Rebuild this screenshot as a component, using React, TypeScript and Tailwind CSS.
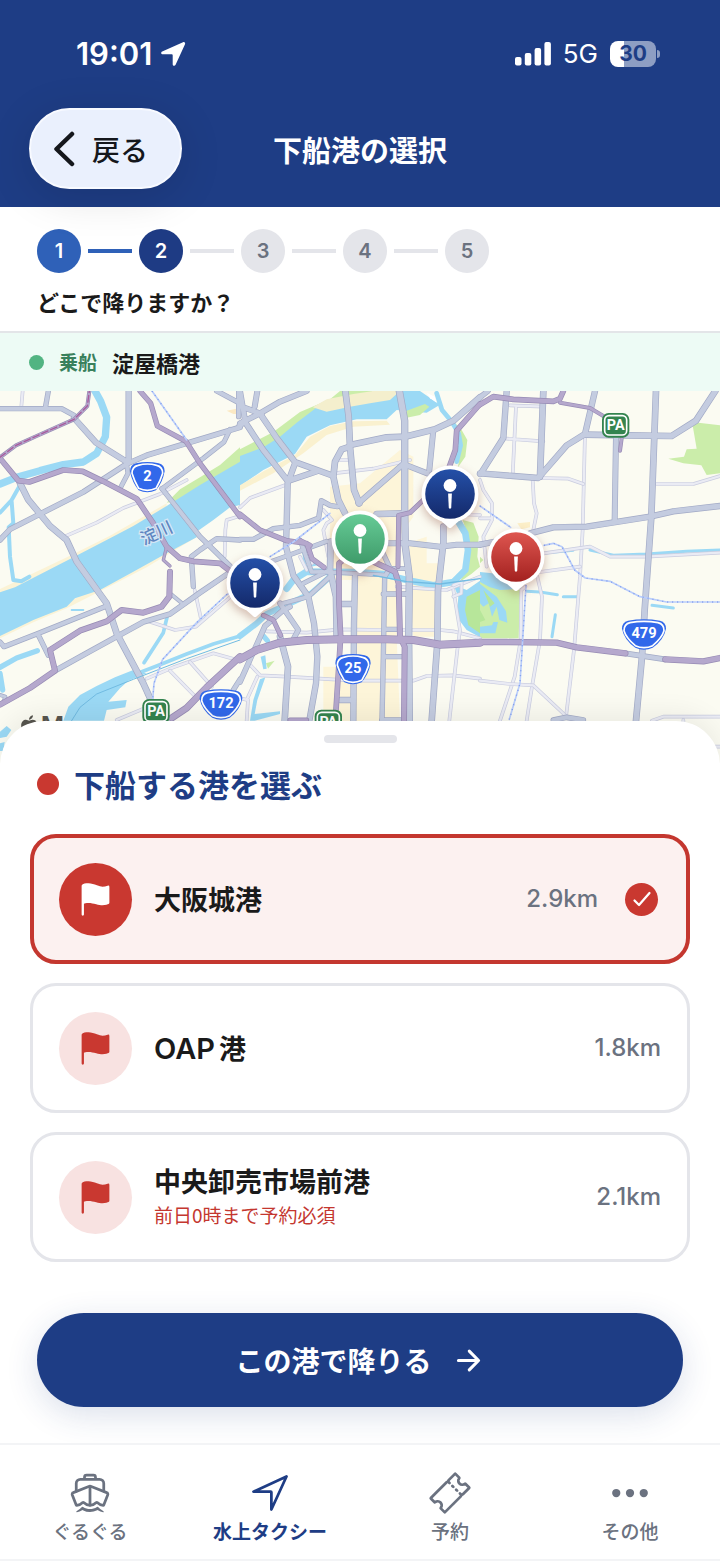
import { useState } from "react";
import type { ReactNode } from "react";
import {
  IoArrowForward,
  IoBoatOutline,
  IoCheckmark,
  IoEllipsisHorizontal,
  IoFlag,
  IoNavigateOutline,
  IoTicketOutline,
} from "react-icons/io5";
import { FaApple } from "react-icons/fa";

const FONT = "font-['Inter','Noto_Sans_CJK_JP',sans-serif]";
const JP = "font-['Noto_Sans_CJK_JP','Inter',sans-serif]";

/* ---------- Map data: three tiles, each 720 units wide ---------- */

type Road = [d: string, width: number];
type Tile = {
  x: number;
  areas: [d: string, fill: string][];
  streams: Road[];
  minor: string[];
  roads: Road[];
  highways: Road[];
  rails: string[];
};

const WATER = "#9bd9f5";
const GREEN = "#cbedaa";
const SAND = "#fbf3d6";

const tiles: Tile[] = [
  {
    x: 0,
    areas: [
      ["M500 338L540 298L600 262L660 225L720 172V225L620 280L540 330Z", GREEN],
      ["M0 597L210 497L330 437L500 340V360L210 520L0 615Z", SAND],
      ["M0 745L100 697L200 655L300 604L440 532L600 435L580 430L400 530L200 640L0 728Z", SAND],
      ["M0 607L45 592L210 507L330 445L400 408L500 348L600 285L720 215V345L690 352L640 390L590 425V442L500 490L400 545L300 600L225 625L200 650L100 690L0 738Z", WATER],
      ["M190 992L205 950L240 915L290 888L345 862L400 840L440 850L385 872L360 895L325 935L380 930L376 952L320 960L312 992Z", WATER],
      ["M680 62L720 54V72L700 72Z", "#fbe9c4"],
      ["M0 1025L20 1008L34 1020L20 1040L0 1044ZM0 1060L14 1056L10 1083H0Z", WATER],
    ],
    streams: [
      ["M285 3L302 34L320 82L316 140L290 190L250 216L190 224L120 242L50 262L0 282", 22],
      ["M62 282L35 330L0 368M35 335L40 400L26 412L30 500L40 570L64 574L88 560", 12],
      ["M0 832L50 804L112 782M0 850L8 900", 16],
      ["M502 678L490 728L462 772L432 818", 11],
      ["M400 855L470 828L560 792L640 762L720 738", 11],
      ["M215 660H250", 6],
    ],
    minor: [
      "M68 3L64 50",
      "M200 437L290 398L370 354L480 312L560 270",
      "M720 378L680 390L676 420L674 500",
      "M584 600L602 682",
      "M440 692L525 720L588 710L720 596",
      "M440 866L520 832L640 790L720 812",
      "M510 842L588 922M570 816L636 890",
      "M350 990L440 952",
    ],
    roads: [
      ["M0 56H185L222 76M145 3L136 54", 14],
      ["M222 84L288 158L378 214M386 3V214", 17],
      ["M0 450L30 418L120 372L250 306L380 222L440 196L560 160L720 112", 15],
      ["M380 225L384 250L360 296M690 118L672 156L610 205L486 296", 13],
      ["M60 280L84 328L150 408L200 450L230 515L320 640L350 730L430 880L450 924", 18],
      ["M486 296L600 440L690 528", 14],
      ["M720 450L650 446L600 480L574 500L580 590", 14],
      ["M0 756L12 770L110 732L320 648M115 735L145 796", 14],
      ["M165 842L270 784L430 696L510 672L600 608L700 540", 15],
      ["M510 610L544 638M0 915L16 920L10 936", 10],
      ["M650 3L720 40M716 3V80", 14],
      ["M720 868L700 900", 14],
    ],
    highways: [
      ["M0 205L55 272L88 276L190 240L248 244L310 274L410 326L460 400L500 470L540 505L580 514L660 520L686 540", 15],
      ["M500 470L490 510L510 528", 8],
      ["M510 545L508 620L485 650L430 668L365 660L320 694L240 722L150 780L165 842L90 894L0 944", 16],
      ["M420 3L452 40L472 108L558 154L600 220L720 380", 14],
      ["M720 800L620 892L560 954L515 984", 19],
      ["M0 202L48 166L110 138L222 88L262 48L268 3", 10],
    ],
    rails: ["M456 3L560 150M720 590L680 614L590 698L488 808L462 880L458 930"],
  },
  {
    x: 720,
    areas: [
      ["M270 290L360 280L480 180L520 200V380L470 450V740L480 992H380L250 1000V830H340V570H270V420Z", "#fdf5d9"],
      ["M500 460L560 440V520H600V740H520Z", "#fdf5d9"],
      ["M0 178L100 126L180 66L270 28L300 3H400L330 45L250 58L180 98L100 165L0 214Z", GREEN],
      ["M0 198L70 172L120 140L170 98L220 60L250 35L290 40L360 24L390 36L430 3H540L600 44L560 68L470 60L440 88H350L270 106L200 140L165 192L70 240L0 288Z", WATER],
      ["M218 52L260 28L340 12L400 3H480L450 30L390 40L330 50L260 65Z", "#f4efcd"],
      ["M165 195L210 140L270 108L340 94L440 92L450 104L340 110L260 135L190 190L100 250L0 302V286L70 244Z", "#faf1cf"],
      ["M500 62L555 42L568 50L540 75L496 84Z", GREEN],
      ["M640 95L662 115L682 150L676 200L654 232L662 170L650 125Z", GREEN],
      ["M668 390L700 398L716 440L712 500L720 530L694 552L660 575L684 520L694 470Z", GREEN],
      ["M640 584L680 600L720 572V742L680 720L650 680L655 620Z", WATER],
      ["M680 620L720 600V730L685 706L675 660Z", "#b7e69a"],
      ["M560 8L584 20L590 38L570 25Z", "#ffffff"],
      ["M62 800L76 796L80 836L70 838Z", WATER],
      ["M78 820L104 812L84 836Z", GREEN],
      ["M30 992L40 930L60 868L76 862L52 930L44 972L120 964V972L44 992Z", WATER],
    ],
    streams: [
      ["M590 10L606 60L636 96L656 130L662 166L650 215", 14],
      ["M655 395L676 430L684 480L676 540L640 576L580 586L500 570L430 552L350 546L200 545L160 570L140 596", 20],
      ["M270 560L215 610L150 640L80 672L50 700L0 738", 18],
      ["M72 740L82 752", 16],
      ["M190 476L195 530L240 520", 8],
    ],
    minor: [
      "M0 352L30 324L134 286M280 250L400 236L510 210M290 210H330",
      "M80 724L200 728L300 718L430 720L600 720L640 724L720 745",
      "M30 824L60 856L140 860L340 872H520L560 858L640 856L720 866",
      "M470 590L550 596L620 600L720 560M640 600L660 720L652 780L628 992",
      "M250 360L276 390L260 400L250 420L265 500M590 370L720 375",
      "M20 992L24 930L0 925M52 860L20 930M640 586L665 575L664 610L640 620",
      "M180 500L200 540M210 480L216 520",
    ],
    roads: [
      ["M0 100L60 70L120 35L200 3M0 48L65 72M52 3L44 50M0 3L15 90", 16],
      ["M15 96L70 180L145 275M65 78L110 144L165 216L275 256M165 220L146 272L230 244", 17],
      ["M316 3L326 80L330 170L342 300L358 340M330 170L305 178L285 215L280 260L295 330L315 370", 18],
      ["M0 106L16 90M330 165L440 142L495 140L585 118L640 92L720 22", 18],
      ["M478 3L494 92V350L496 470L508 560L506 740L508 992", 20],
      ["M355 340L490 222L562 250M580 120L568 240", 16],
      ["M143 280L140 400L138 470L160 556L205 620L222 700L232 800L228 880L208 992", 17],
      ["M0 448H40L100 416L180 406L236 384L244 332L270 346L292 350", 14],
      ["M0 548L140 498L260 454M180 450L215 546L270 545M190 580L270 540M130 640L205 620L270 560", 13],
      ["M120 640L175 720L162 744M0 876L75 708L130 660L150 650", 15],
      ["M120 740L144 830L134 992M272 455L270 540L288 620L290 740", 18],
      ["M345 560L342 700L340 992M300 642H340M300 930H340", 17],
      ["M410 372L495 370M610 410V460L594 600L592 760L575 992", 18],
      ["M440 460H510L600 470L650 464H720", 16],
      ["M420 470L450 535L434 560L430 800L426 992M430 612H500M432 718H480M432 800H500M425 990H490", 14],
      ["M262 546L340 550L430 555M450 535L500 536L512 570", 12],
    ],
    highways: [
      ["M0 372L60 420L140 452L200 460L216 506L252 532M180 452L210 466", 14],
      ["M0 808L50 780L120 758L200 750L300 748L440 748L520 750L600 764L720 758", 22],
      ["M310 510L297 520V640L302 740L288 960", 15],
      ["M400 515L465 545L476 580L480 740L494 770L492 992", 16],
      ["M550 330L510 368L476 376L474 530", 13],
      ["M720 42L650 122L646 180L628 230", 15],
      ["M70 676L100 690L122 736M150 990L200 990", 13],
    ],
    rails: ["M90 500L160 456L270 370"],
  },
  {
    x: 1440,
    areas: [
      ["M0 556L60 580L120 600L116 745H0Z", GREEN],
      ["M636 96L720 106V250L680 255L664 226L610 220L565 206L612 200L620 178L650 176L642 130Z", GREEN],
      ["M112 400L150 396V412L124 418Z", "#fcefc8"],
      ["M0 546L60 552L128 596L60 600L30 592L0 576Z", WATER],
      ["M0 582L50 620L78 664L82 698L58 690L50 650L36 680L26 640L10 650L0 640ZM0 710L36 706L40 696H54L46 730H0Z", WATER],
      ["M10 600L44 640L30 650ZM0 660L16 690L0 696Z", "#b7e69a"],
      ["M0 500L10 510L0 520Z", GREEN],
    ],
    streams: [
      ["M140 604L180 606L232 614M250 620H294M516 646L580 654", 9],
      ["M226 674L216 740", 9],
      ["M330 480L400 496L500 492L620 484L720 480", 9],
      ["M200 490L280 482", 6],
    ],
    minor: [
      "M90 46L190 50M108 50L98 255M80 146L190 154M315 130L308 420L300 560L282 780L258 980",
      "M0 270L10 300L36 340V390L10 440L20 530M0 385H34",
      "M158 270L162 340L170 370L160 420M180 264L265 266L310 282",
      "M190 490L330 470L390 500L500 500L720 488M180 546L300 530",
      "M136 590L124 600L122 750L104 860L60 992M172 560L186 620L180 750L156 890L140 992",
      "M0 872L90 882L160 886L258 978M516 992L550 980H720M610 990V1000M700 1070H720",
      "M530 282H640L720 258",
    ],
    roads: [
      ["M80 3L70 144L4 248L0 252M0 250L100 258L175 264L260 166L315 132L345 3", 17],
      ["M190 3L180 260M315 134L440 136L575 138L648 92L706 3", 18],
      ["M528 3L514 380L494 660L486 800L468 992", 18],
      ["M0 464L40 456M150 430L220 412L320 410L510 380L580 364L720 348", 17],
      ["M408 140L404 390", 16],
      ["M0 22L24 3M436 790L556 808M220 990L260 982L310 990", 15],
    ],
    highways: [
      ["M0 44L40 20L100 28L220 34L240 26L250 3", 15],
      ["M240 38L330 54L370 78M425 145L420 182", 10],
      ["M0 756H80L230 758L290 772L436 790M556 808L670 814L720 804", 17],
    ],
    rails: [
      "M0 348L92 412M192 466L220 460L246 470L268 510L284 540L316 564L390 574L480 620L560 636H720",
      "M138 586L120 880L88 988",
    ],
  },
];

function TileLayer({ pick }: { pick: (tile: Tile) => ReactNode }) {
  return (
    <>
      {tiles.map((tile) => (
        <g key={tile.x} transform={`translate(${tile.x} 0)`}>
          {pick(tile)}
        </g>
      ))}
    </>
  );
}

function strokes(list: Road[], color: string, extra: number) {
  return list.map(([d, w]) => <path key={d} d={d} stroke={color} strokeWidth={w + extra} />);
}

function RouteShield({ x, y, w, label }: { x: number; y: number; w: number; label: string }) {
  const h = w / 2;
  const shape = (r: number, t: number, b: number) =>
    `M${-r + 18} ${-t}Q0 ${-t - 8} ${r - 18} ${-t}Q${r} ${-t + 4} ${r} ${-t + 24}Q${r - 6} ${b - 30} 26 ${b - 6}Q0 ${b + 6} -26 ${b - 6}Q${-r + 6} ${b - 30} ${-r} ${-t + 24}Q${-r} ${-t + 4} ${-r + 18} ${-t}Z`;
  return (
    <g transform={`translate(${x} ${y})`}>
      <path d={shape(h, 42, 45)} fill="#3168ea" />
      <path d={shape(h - 6, 36, 39)} fill="#3168ea" stroke="#fff" strokeWidth="5" />
      <text y="10" textAnchor="middle" fill="#fff" fontSize="44" fontWeight="700" fontFamily="Roboto">
        {label}
      </text>
    </g>
  );
}

function ParkingSign({ x, y }: { x: number; y: number }) {
  return (
    <g transform={`translate(${x} ${y})`}>
      <rect x="-41" y="-37" width="82" height="74" rx="20" fill="#34844f" />
      <rect x="-33" y="-29" width="66" height="58" rx="13" fill="#34844f" stroke="#fff" strokeWidth="5" />
      <text
        y="15"
        textAnchor="middle"
        fill="#fff"
        fontSize="43"
        fontWeight="700"
        fontFamily="'Liberation Sans Narrow', Roboto, sans-serif"
      >
        PA
      </text>
    </g>
  );
}

function CityMap() {
  return (
    <svg viewBox="0 3 2160 1125" className="block w-full" role="img" aria-label="大阪の地図">
      <rect y="3" width="2160" height="1125" fill="#fbfbf2" />
      <TileLayer pick={(t) => t.areas.map(([d, fill]) => <path key={d} d={d} fill={fill} />)} />
      <g fill="none" strokeLinejoin="round" strokeLinecap="round">
        <TileLayer pick={(t) => strokes(t.streams, WATER, 0)} />
        <TileLayer
          pick={(t) =>
            t.minor.map((d) => (
              <g key={d}>
                <path d={d} stroke="#c9ccdf" strokeWidth="11" />
                <path d={d} stroke="#eaebf4" strokeWidth="7" />
              </g>
            ))
          }
        />
        <TileLayer pick={(t) => strokes(t.roads, "#a2aac6", 2)} />
        <TileLayer pick={(t) => strokes(t.roads, "#c4cce0", -2)} />
        <TileLayer pick={(t) => strokes(t.highways, "#978bb4", 2)} />
        <TileLayer pick={(t) => strokes(t.highways, "#b5a8cd", -2)} />
        <path d="M0 202L48 166L110 138L222 88L262 48L268 3" stroke="#a85a9c" strokeWidth="4" strokeDasharray="20 9" />
        <path d="M215 992L240 952L290 912L400 868L560 806L720 750" stroke="#71bbe2" strokeWidth="3" />
        <path d="M1120 556L1220 575L1320 582L1440 566" stroke="#71bbe2" strokeWidth="4" />
        <TileLayer
          pick={(t) =>
            t.rails.map((d) => (
              <g key={d}>
                <path d={d} stroke="#b9cdfb" strokeWidth="5" />
                <path d={d} stroke="#7f9bec" strokeWidth="4" strokeDasharray="3 12" strokeLinecap="butt" />
              </g>
            ))
          }
        />
      </g>
      <text
        transform="translate(432 466) rotate(-25)"
        fontSize="50"
        fontWeight="500"
        fill="#5f86c0"
        stroke="#d5e6f5"
        strokeWidth="8"
        paintOrder="stroke"
      >
        淀川
      </text>
      <RouteShield x={442} y={262} w={104} label="2" />
      <RouteShield x={663} y={944} w={128} label="172" />
      <RouteShield x={1059} y={838} w={106} label="25" />
      <RouteShield x={1932} y={734} w={132} label="479" />
      <ParkingSign x={468} y={964} />
      <ParkingSign x={985} y={996} />
      <ParkingSign x={1847} y={106} />
      <g transform="translate(55 972)">
        <FaApple size={64} color="#57554f" />
      </g>
      <text x="122" y="1036" fontSize="76" fontWeight="600" fill="#57554f">
        Maps
      </text>
    </svg>
  );
}

type Pin = { id: string; name: string; place: string; from: string; to: string };

const pins: Pin[] = [
  { id: "market", name: "中央卸売市場前港", place: "left-[35.4%] top-[51.2%]", from: "#2450a8", to: "#14296a" },
  { id: "yodoyabashi", name: "淀屋橋港", place: "left-[50%] top-[39.5%]", from: "#66cb96", to: "#3f9b6a" },
  { id: "oap", name: "OAP港", place: "left-[62.5%] top-[27.5%]", from: "#2450a8", to: "#14296a" },
  { id: "castle", name: "大阪城港", place: "left-[71.6%] top-[44.3%]", from: "#de5650", to: "#a3211f" },
];

function MapPin({ pin }: { pin: Pin }) {
  return (
    <button
      type="button"
      aria-label={pin.name}
      className={`absolute -mt-8 -ml-8 size-16 drop-shadow-[0_4px_5px_rgba(120,40,20,0.3)] ${pin.place}`}
    >
      <svg viewBox="-32 -32 64 64" className="block size-full overflow-visible" aria-hidden="true">
        <defs>
          <linearGradient id={`fill-${pin.id}`} x1="0" y1="0" x2="0" y2="1">
            <stop offset="0" stopColor={pin.from} />
            <stop offset="1" stopColor={pin.to} />
          </linearGradient>
        </defs>
        <path d="M-10 26L-1.500 33.500Q0 34.500 1.500 33.500L10 26Z" fill="#fff" />
        <circle r="28.500" fill="#fff" />
        <circle r="24.800" fill={`url(#fill-${pin.id})`} />
        <circle cy="-8.500" r="6.400" fill="#fff" />
        <path d="M-1.900 -.5H1.900L1.200 14Q0 15.500 -1.200 14Z" fill="#fff" />
      </svg>
    </button>
  );
}

/* ---------- Header ---------- */

function StatusBar() {
  return (
    <div className="flex h-[108px] items-center justify-between pr-[60px] pl-[76px] text-white">
      <div className="flex items-center gap-2">
        <span className="text-[31px] leading-8 font-semibold">19:01</span>
        <svg viewBox="0 0 26 26" className="size-[26px]" aria-hidden="true">
          <path
            d="M23 1.200C24.500 .6 25.600 1.700 25 3.200L15.600 23.800C14.900 25.400 12.700 25 12.700 23.200V14.200C12.700 13.600 12.400 13.300 11.800 13.300H2.800C1 13.300 .6 11.100 2.200 10.400Z"
            fill="currentColor"
          />
        </svg>
      </div>
      <div className="flex items-center gap-3">
        <svg viewBox="0 0 36 24" className="h-6 w-9" aria-hidden="true" fill="currentColor">
          <rect x="0" y="15" width="6.500" height="8.500" rx="2" />
          <rect x="9.800" y="11" width="6.500" height="12.500" rx="2" />
          <rect x="19.600" y="6" width="6.500" height="17.500" rx="2" />
          <rect x="29.400" y="0" width="6.500" height="23.500" rx="2" />
        </svg>
        <span className="text-[26px] leading-8">5G</span>
        <div className="flex items-center gap-px">
          <div className="flex h-[26px] w-[46px] items-center justify-center rounded-lg bg-linear-to-r from-white from-30% to-[#8e9ec3] to-30%">
            <span className="text-[21px] leading-6 font-bold text-[#1e3d85]">30</span>
          </div>
          <div className="h-2 w-[3px] rounded-r-full bg-[#8e9ec3]" />
        </div>
      </div>
    </div>
  );
}

function Header() {
  return (
    <header className="relative z-10 bg-[#1e3d85] pb-[18px]">
      <StatusBar />
      <div className={`grid grid-cols-[1fr_auto_1fr] items-center px-[29px] ${JP}`}>
        <button
          type="button"
          className="flex h-[81px] w-[153px] items-center gap-[17px] justify-self-start rounded-full border-2 border-[#f8faff] bg-[#eaf0fd] pl-[22px] text-[28px] font-medium text-[#15171c] shadow-[0_8px_44px_rgba(0,0,0,0.13)]"
        >
          <svg viewBox="0 0 22 36" className="h-9 w-[22px]" aria-hidden="true">
            <path
              d="M19 3L3.500 18L19 33"
              fill="none"
              stroke="currentColor"
              strokeWidth="4.500"
              strokeLinecap="round"
              strokeLinejoin="round"
            />
          </svg>
          戻る
        </button>
        <h1 className="text-[29px] leading-10 font-semibold text-white">下船港の選択</h1>
      </div>
    </header>
  );
}

/* ---------- Progress ---------- */

const steps = [1, 2, 3, 4, 5];
const CURRENT = 2;

function stepStyle(n: number) {
  if (n < CURRENT) return "bg-[#2f61b8] text-white";
  if (n === CURRENT) return "bg-[#1e3b84] text-white";
  return "bg-[#e4e5ea] text-[#6b7280]";
}

function Progress() {
  return (
    <section className="border-b-2 border-[#e3e5e8] bg-white px-[37px] pt-[22px] pb-[14px]">
      <ol className="flex items-center gap-[7px]">
        {steps.map((n) => (
          <li key={n} className="flex items-center gap-[7px]">
            {n > 1 && <span className={`h-1 w-11 ${n <= CURRENT ? "bg-[#2f61b8]" : "bg-[#e4e5ea]"}`} />}
            <span
              className={`flex size-11 items-center justify-center rounded-full text-[20px] font-semibold ${stepStyle(n)}`}
              aria-current={n === CURRENT ? "step" : undefined}
            >
              {n}
            </span>
          </li>
        ))}
      </ol>
      <p className={`mt-3 text-[22px] leading-8 font-semibold text-[#1a1a1a] ${JP}`}>どこで降りますか？</p>
    </section>
  );
}

/* ---------- Port list ---------- */

type Port = { id: string; latin?: string; name: string; distance: string; note?: string };

const ports: Port[] = [
  { id: "castle", name: "大阪城港", distance: "2.9km" },
  { id: "oap", latin: "OAP", name: "港", distance: "1.8km" },
  { id: "market", name: "中央卸売市場前港", distance: "2.1km", note: "前日0時まで予約必須" },
];

function PortCard({ port, selected, onSelect }: { port: Port; selected: boolean; onSelect: () => void }) {
  return (
    <label
      className={`relative flex h-[130px] cursor-pointer items-center rounded-[26px] ${
        selected
          ? "border-4 border-[#c4372f] bg-[#fcf1f0] px-[25px]"
          : "border-[3px] border-[#e4e5ea] bg-white px-[26px]"
      }`}
    >
      <input type="radio" name="port" className="sr-only" checked={selected} onChange={onSelect} />
      <span
        className={`flex size-[73px] shrink-0 items-center justify-center rounded-full ${
          selected ? "bg-[#c93830] text-white" : "bg-[#f8e2e1] text-[#c93830]"
        }`}
      >
        <IoFlag className="size-[37px]" aria-hidden="true" />
      </span>
      <span className={`ml-[22px] flex grow flex-col ${JP}`}>
        <span className="text-[27px] leading-9 font-semibold text-[#1a1a1a]">
          {port.latin && <span className={`mr-1 text-[29px] ${FONT}`}>{port.latin}</span>}
          {port.name}
        </span>
        {port.note && <span className="text-[19px] leading-8 text-[#c4372f]">{port.note}</span>}
      </span>
      <span className="text-[24px] leading-9 font-medium text-[#6b7280]">{port.distance}</span>
      {selected && (
        <span className="mr-[3px] ml-[27px] flex size-[33px] items-center justify-center rounded-full bg-[#c93830] text-white">
          <IoCheckmark className="size-6 [&_path]:[stroke-width:48px]" aria-hidden="true" />
        </span>
      )}
    </label>
  );
}

/* ---------- Tab bar ---------- */

const tabs = [
  { label: "ぐるぐる", Icon: IoBoatOutline, active: false },
  { label: "水上タクシー", Icon: IoNavigateOutline, active: true },
  { label: "予約", Icon: IoTicketOutline, active: false },
  { label: "その他", Icon: IoEllipsisHorizontal, active: false },
];

function TabBar() {
  return (
    <nav className="relative border-y-2 border-[#f3f4f6] bg-white">
      <ul className={`grid grid-cols-4 ${JP}`}>
        {tabs.map(({ label, Icon, active }) => (
          <li key={label}>
            <a
              href="#"
              aria-current={active ? "page" : undefined}
              className={`flex h-[114px] flex-col items-center pt-[26px] ${
                active ? "font-semibold text-[#1e3d85]" : "font-medium text-[#6b7280]"
              }`}
            >
              <Icon className="size-11" aria-hidden="true" />
              <span className="mt-1 text-[19px] leading-6">{label}</span>
            </a>
          </li>
        ))}
      </ul>
    </nav>
  );
}

export default function App() {
  const [selected, setSelected] = useState("castle");

  return (
    <div lang="ja" className={`flex min-h-screen flex-col bg-white ${FONT}`}>
      <Header />
      <Progress />
      <div className={`flex h-[58px] items-center bg-[#edfbf5] px-[29px] ${JP}`}>
        <span className="size-[15px] rounded-full bg-[#52b482]" />
        <span className="ml-[15px] text-[19px] leading-6 font-semibold text-[#39805c]">乗船</span>
        <span className="ml-[15px] text-[22px] leading-6 font-semibold text-[#1a1a1a]">淀屋橋港</span>
      </div>

      <div className="relative overflow-hidden">
        <CityMap />
        {pins.map((pin) => (
          <MapPin key={pin.id} pin={pin} />
        ))}
      </div>

      <main className="relative -mt-[45px] grow rounded-t-[44px] bg-white px-[30px] pt-[14px] pb-[35px] shadow-[0_-6px_28px_rgba(0,0,0,0.07)]">
        <div className="mx-auto h-2 w-[73px] rounded-full bg-[#e4e5ea]" />
        <h2
          className={`mt-[21px] flex items-center gap-[15px] pl-[7px] text-[31px] leading-10 font-bold text-[#1e3d85] ${JP}`}
        >
          <span className="size-[22px] rounded-full bg-[#c93830]" />
          下船する港を選ぶ
        </h2>
        <div role="radiogroup" aria-label="下船する港" className="mt-[30px] flex flex-col gap-[19px]">
          {ports.map((port) => (
            <PortCard
              key={port.id}
              port={port}
              selected={port.id === selected}
              onSelect={() => setSelected(port.id)}
            />
          ))}
        </div>
        <div className="mt-[51px] px-[7px]">
          <button
            type="button"
            className={`flex h-[94px] w-full items-center justify-center gap-5 rounded-full bg-[#1e3d85] text-[28px] font-bold text-white shadow-[0_8px_32px_rgba(30,61,133,0.16)] ${JP}`}
          >
            この港で降りる
            <IoArrowForward className="size-[33px]" aria-hidden="true" />
          </button>
        </div>
      </main>
      <TabBar />
    </div>
  );
}
